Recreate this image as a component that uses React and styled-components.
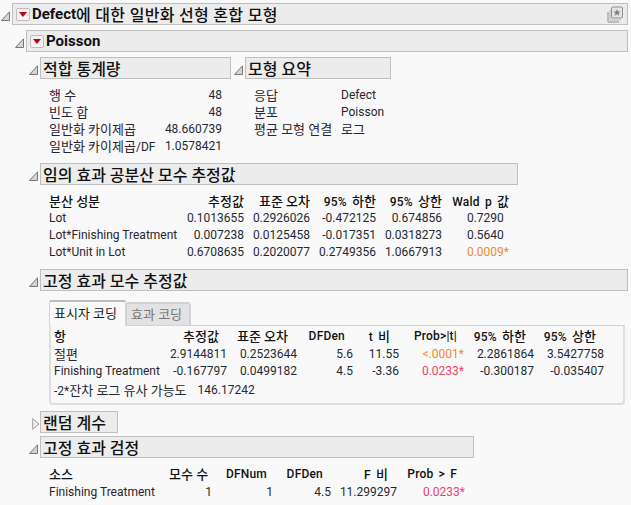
import React from 'react'
import styled, { createGlobalStyle } from 'styled-components'

const GlobalStyle = createGlobalStyle`
	html, body {
		margin: 0;
		background: #f9f9f9;
	}
	body {
		width: 631px;
		height: 505px;
		overflow: hidden;
		font-family: Roboto, 'Noto Sans CJK KR', sans-serif;
		font-size: 12px;
		color: #1a1a1a;
	}
`

const Page = styled.div`
	padding-top: 3px;
	width: 628px;
`

const NodeRow = styled.div`
	display: flex;
	align-items: center;
`

const NodeBody = styled.div`
	margin-left: 14px;
	padding-top: ${p => p.$top || 0}px;
`

const ToggleBox = styled.div`
	width: 12px;
	flex: none;
	display: flex;
	align-items: center;
	height: 22px;
	svg {
		margin-left: ${p => p.$shift || 1}px;
		margin-top: 3px;
	}
`

const Header = styled.div`
	box-sizing: border-box;
	height: 22px;
	border: 1px solid #bfbfbf;
	background: #ececec;
	display: flex;
	align-items: center;
	padding-left: ${p => (p.$menu ? 3 : 2)}px;
	width: ${p => (p.$width ? `${p.$width}px` : 'auto')};
	flex: ${p => (p.$width ? 'none' : 1)};
	font-weight: 700;
	font-size: 15px;
	color: #111;
	position: relative;
`

const HeaderKo = styled.span`
	font-size: 16px;
	font-weight: 500;
	white-space: pre;
	letter-spacing: ${p => (p.$wide ? 0.3 : 0)}px;
`

const MenuButton = styled.div`
	box-sizing: border-box;
	width: 14px;
	height: 13px;
	flex: none;
	margin-right: 2px;
	border: 1px solid #c4bcbc;
	border-radius: 2px;
	background: #f3f1f1;
	display: flex;
	align-items: center;
	justify-content: center;
	&::after {
		content: '';
		border-left: 4.5px solid transparent;
		border-right: 4.5px solid transparent;
		border-top: 5px solid #c00010;
	}
`

const SnapIcon = styled.svg`
	position: absolute;
	right: 3px;
	top: 2px;
`

const SideBySide = styled.div`
	display: flex;
	gap: 2px;
`

const Section = styled.div`
	margin-top: ${p => p.$top || 0}px;
`

const Grid = styled.div`
	display: grid;
	grid-template-columns: ${p => p.$cols};
	grid-template-rows: ${p => p.$headRow || 17}px;
	grid-auto-rows: 17px;
	margin-left: ${p => p.$left}px;
	padding-top: ${p => p.$top || 0}px;
	line-height: 17px;
	white-space: pre;
`

const Label = styled.div`
	color: ${p => (p.$head ? '#111' : '#2b2430')};
	font-weight: ${p => (p.$head ? 500 : 400)};
`

const Head = styled.div`
	text-align: right;
	font-weight: 500;
	color: #111;
	letter-spacing: 0.2px;
	word-spacing: 2px;
	padding-right: ${p => p.$pad || 0}px;
`

const Num = styled.div`
	text-align: right;
	color: ${p => p.$color || '#1f2a33'};
`

const Star = styled.span`
	visibility: ${p => (p.$hidden ? 'hidden' : 'visible')};
`

const TabStrip = styled.div`
	display: flex;
	align-items: flex-end;
	margin-left: 7px;
	margin-top: 9px;
	height: 26px;
`

const Tab = styled.div`
	box-sizing: border-box;
	height: ${p => (p.$active ? 26 : 24)}px;
	width: ${p => (p.$active ? 77 : 66)}px;
	padding-left: 4px;
	line-height: ${p => (p.$active ? 24 : 21)}px;
	border: ${p => (p.$active ? '1px solid #d4d4d4' : '2px solid #d2d2d2')};
	border-top: 2px solid ${p => (p.$active ? '#bcbcbc' : '#d2d2d2')};
	border-bottom: ${p => (p.$active ? 'none' : '1px solid #d2d2d2')};
	border-radius: ${p => (p.$active ? '2px 2px 0 0' : '4px 4px 0 0')};
	background: ${p => (p.$active ? '#f9f9f9' : '#e2e2e2')};
	color: ${p => (p.$active ? '#1a1a1a' : '#777')};
	margin-left: ${p => (p.$active ? 0 : '-1px')};
	position: relative;
	z-index: ${p => (p.$active ? 1 : 0)};
`

const TabPanel = styled.div`
	box-sizing: border-box;
	margin-left: 7px;
	width: 576px;
	height: 80px;
	margin-top: -1px;
	border-top: 1px solid #cfcfcf;
	border-left: 2px solid #dedede;
	border-right: 2px solid #dedede;
	border-bottom: 2px solid #dedede;
	border-bottom-left-radius: 4px;
	border-bottom-right-radius: 4px;
	padding: 2px 0 0 3px;
`

const FootRow = styled.div`
	display: flex;
	gap: 11px;
	line-height: 17px;
	margin-top: 2px;
	white-space: pre;
	color: #1f2a33;
`

const Ko = styled.span`
	font-size: 13px;
	letter-spacing: 0;
	word-spacing: 0;
`

// 한글 구간만 글자 크기를 따로 준다
const T = ({ children }) =>
	children
		.split(/([가-힣][가-힣 ]*)/)
		.map((part, i) => (i % 2 ? <Ko key={i}>{part}</Ko> : part))

const Triangle = () => (
	<svg width="9" height="10" viewBox="0 0 9 10">
		<path d="M8.5 0.8 V9.5 H0.5 Z" fill="#d4d4d4" stroke="#777" strokeWidth="1" />
	</svg>
)

const ClosedTriangle = () => (
	<svg width="8" height="12" viewBox="0 0 8 12">
		<path d="M0.7 0.7 L7 6 L0.7 11.3 Z" fill="#f4f4f4" stroke="#9a9a9a" strokeWidth="1" />
	</svg>
)

const SnapshotIcon = () => (
	<SnapIcon width="17" height="17" viewBox="0 0 17 17">
		<path d="M1 6 V16 H12" fill="none" stroke="#8f8f8f" strokeWidth="1" />
		<path d="M3 4 V14 H14" fill="none" stroke="#b5b5b5" strokeWidth="1" />
		<rect x="4.5" y="1" width="11" height="11" rx="1" fill="#e4e4e4" stroke="#8f8f8f" />
		<path d="M10 3 L11 5.6 L13.6 5.6 L11.5 7.2 L12.3 9.8 L10 8.3 L7.7 9.8 L8.5 7.2 L6.4 5.6 L9 5.6 Z" fill="#7d7d7d" />
	</SnapIcon>
)

const Node = ({ title, menu, width, closed, shift, top, action, children }) => (
	<div>
		<NodeRow>
			<ToggleBox $shift={shift}>{closed ? <ClosedTriangle /> : <Triangle />}</ToggleBox>
			<Header $menu={menu} $width={width}>
				{menu && <MenuButton />}
				{title}
				{action}
			</Header>
		</NodeRow>
		{children && <NodeBody $top={top}>{children}</NodeBody>}
	</div>
)

const Rows = ({ rows }) =>
	rows.map(row =>
		row.map((cell, i) =>
			i === 0 ? (
				<Label key={i}>
					<T>{cell}</T>
				</Label>
			) : (
				<Num key={i} $color={cell.color}>
					{cell.text || cell}
					{cell.star !== undefined && <Star $hidden={!cell.star}>*</Star>}
				</Num>
			)
		)
	)

const orange = '#f08a30'
const red = '#f0406a'

export default function App() {
	return (
		<Page>
			<GlobalStyle />
			<Node
				menu
				title={
					<>
						Defect<HeaderKo $wide>에 대한 일반화 선형 혼합 모형</HeaderKo>
					</>
				}
				top={5}
				action={<SnapshotIcon />}
			>
				<Node menu title="Poisson" top={5}>
					<SideBySide>
						<Node title={<HeaderKo>적합 통계량</HeaderKo>} width={191}>
							<Grid $cols="110px 63px" $left={7} $top={8}>
								<Rows
									rows={[
										['행 수', '48'],
										['빈도 합', '48'],
										['일반화 카이제곱', '48.660739'],
										['일반화 카이제곱/DF', '1.0578421'],
									]}
								/>
							</Grid>
						</Node>
						<Node title={<HeaderKo>모형 요약</HeaderKo>} width={146}>
							<Grid $cols="87px 60px" $left={7} $top={8}>
								<Label><T>응답</T></Label>
								<Label>Defect</Label>
								<Label><T>분포</T></Label>
								<Label>Poisson</Label>
								<Label><T>평균 모형 연결</T></Label>
								<Label><T>로그</T></Label>
							</Grid>
						</Node>
					</SideBySide>

					<Section $top={8}>
						<Node title={<HeaderKo>임의 효과 공분산 모수 추정값</HeaderKo>} width={478}>
							<Grid $cols="130px 65px 66px 66px 66px 67px" $left={7} $top={8}>
								<Label $head><T>분산 성분</T></Label>
								<Head><T>추정값</T></Head>
								<Head><T>표준 오차</T></Head>
								<Head><T>95% 하한</T></Head>
								<Head><T>95% 상한</T></Head>
								<Head><T>Wald p 값</T></Head>
								<Rows
									rows={[
										['Lot', '0.1013655', '0.2926026', '-0.472125', '0.674856', { text: '0.7290', star: false }],
										['Lot*Finishing Treatment', '0.007238', '0.0125458', '-0.017351', '0.0318273', { text: '0.5640', star: false }],
										['Lot*Unit in Lot', '0.6708635', '0.2020077', '0.2749356', '1.0667913', { text: '0.0009', star: true, color: orange }],
									]}
								/>
							</Grid>
						</Node>
					</Section>

					<Section $top={8}>
						<Node title={<HeaderKo>고정 효과 모수 추정값</HeaderKo>}>
							<TabStrip>
								<Tab $active><T>표시자 코딩</T></Tab>
								<Tab><T>효과 코딩</T></Tab>
							</TabStrip>
							<TabPanel>
								<Grid $cols="110px 63px 70px 56px 46px 65px 70px 70px" $left={0} $headRow={18}>
									<Label $head><T>항</T></Label>
									<Head $pad={8}><T>추정값</T></Head>
									<Head $pad={9}><T>표준 오차</T></Head>
									<Head $pad={8}>DFDen</Head>
									<Head $pad={9}><T>t 비</T></Head>
									<Head $pad={7}>Prob&gt;|t|</Head>
									<Head $pad={8}><T>95% 하한</T></Head>
									<Head $pad={8}><T>95% 상한</T></Head>
									<Rows
										rows={[
											['절편', '2.9144811', '0.2523644', '5.6', '11.55', { text: '<.0001', star: true, color: orange }, '2.2861864', '3.5427758'],
											['Finishing Treatment', '-0.167797', '0.0499182', '4.5', '-3.36', { text: '0.0233', star: true, color: red }, '-0.300187', '-0.035407'],
										]}
									/>
								</Grid>
								<FootRow>
									<span><T>-2*잔차 로그 유사 가능도</T></span>
									<span>146.17242</span>
								</FootRow>
							</TabPanel>
						</Node>
					</Section>

					<Section $top={6}>
						<Node closed title={<HeaderKo>랜덤 계수</HeaderKo>} width={78} shift={4} />
					</Section>

					<Section $top={3}>
						<Node title={<HeaderKo>고정 효과 검정</HeaderKo>} width={434}>
							<Grid $cols="120px 43px 61px 58px 66px 68px" $left={7} $top={8} $headRow={18}>
								<Label $head><T>소스</T></Label>
								<Head $pad={7}><T>모수 수</T></Head>
								<Head $pad={6}>DFNum</Head>
								<Head $pad={8}>DFDen</Head>
								<Head $pad={9}><T>F 비</T></Head>
								<Head $pad={8}>Prob &gt; F</Head>
								<Rows
									rows={[
										['Finishing Treatment', '1', '1', '4.5', '11.299297', { text: '0.0233', star: true, color: red }],
									]}
								/>
							</Grid>
						</Node>
					</Section>
				</Node>
			</Node>
		</Page>
	)
}
